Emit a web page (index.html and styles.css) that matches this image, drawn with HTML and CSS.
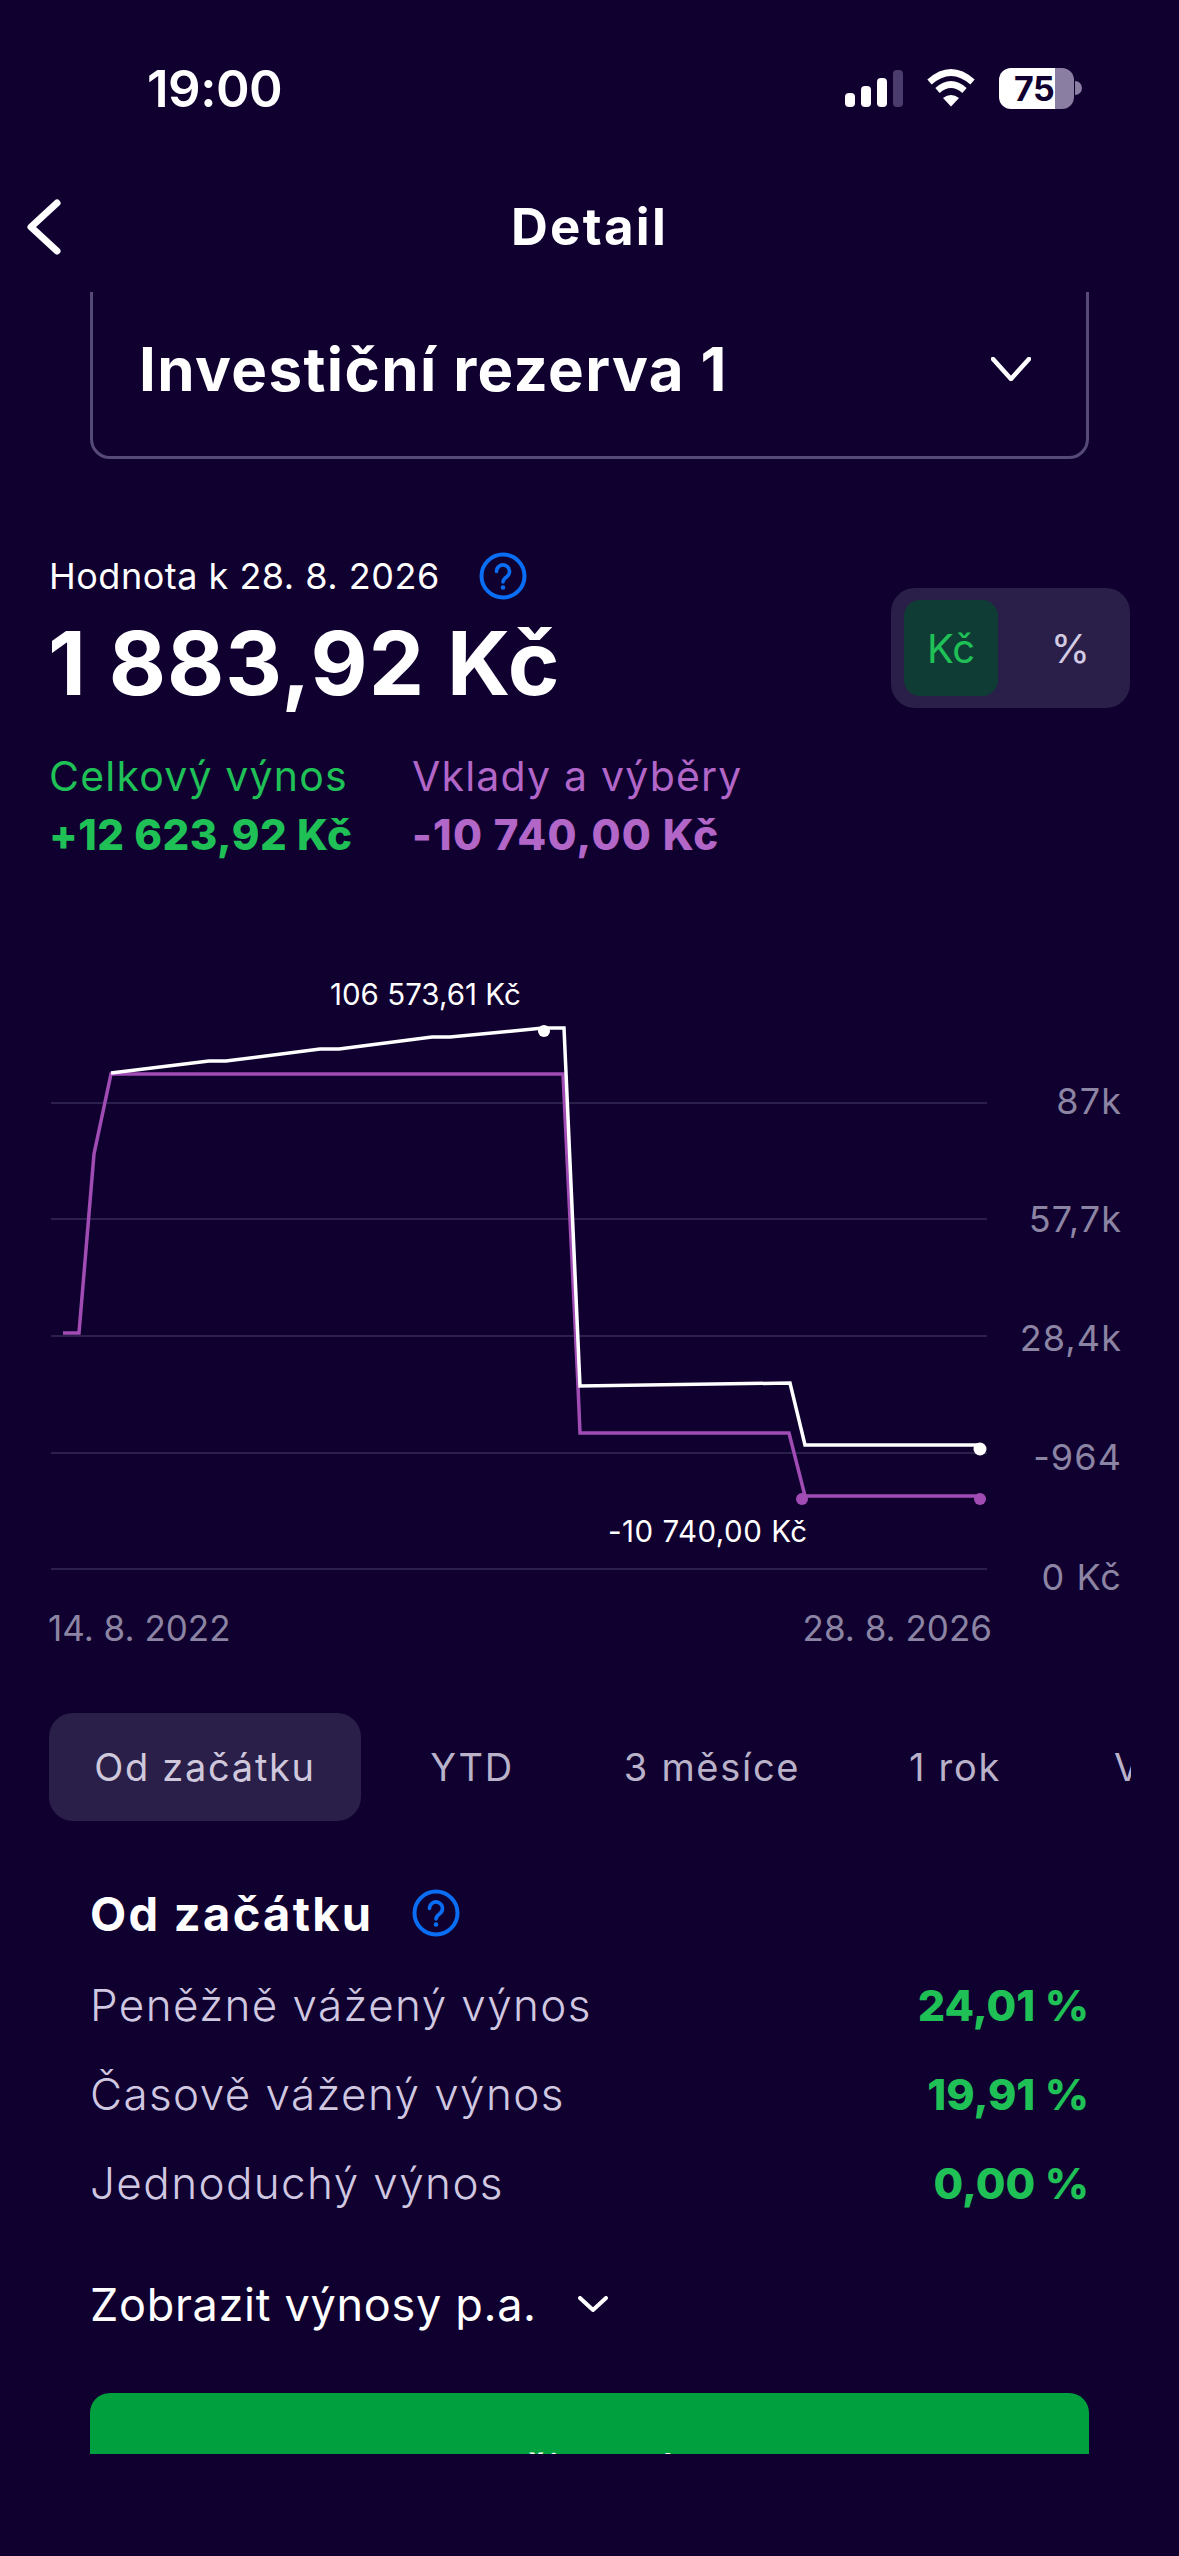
FILE: index.html
```html
<!DOCTYPE html>
<html lang="cs">
<head>
<meta charset="utf-8">
<title>Detail</title>
<link rel="stylesheet" href="styles.css">
</head>
<body>
<svg class="defs" width="0" height="0" aria-hidden="true">
  <symbol id="help" viewBox="0 0 48 48">
    <circle cx="24" cy="24" r="21.5" fill="none" stroke="#0a6ef5" stroke-width="4"/>
    <path d="M17.5 19.5a6.5 6.5 0 1 1 10.5 5c-2.6 1.9-4 3-4 5.5" fill="none" stroke="#0a6ef5" stroke-width="3.6" stroke-linecap="round"/>
    <circle cx="24" cy="35.5" r="2.3" fill="#0a6ef5"/>
  </symbol>
</svg>
<div class="phone">
  <header class="status">
    <span class="time">19:00</span>
    <div class="status-icons">
      <div class="signal">
        <i class="bar b1"></i><i class="bar b2"></i><i class="bar b3"></i><i class="bar b4"></i>
      </div>
      <svg class="wifi" viewBox="0 0 50 38" width="50" height="38">
        <path d="M3.5 13Q25-6 46.500 13" fill="none" stroke="#fff" stroke-width="6.500"/>
        <path d="M11.500 21.500Q25 9.500 38.500 21.500" fill="none" stroke="#fff" stroke-width="6.500"/>
        <path d="M17 29Q25 23 33 29L25 37.500Z" fill="#fff"/>
      </svg>
      <div class="battery-wrap">
        <div class="battery"><span>75</span></div>
        <i class="nub"></i>
      </div>
    </div>
  </header>
  <nav class="nav">
    <svg class="back" viewBox="0 0 40 60" width="40" height="60">
      <path d="M33 6 7 30l26 24" fill="none" stroke="#fff" stroke-width="7" stroke-linecap="round" stroke-linejoin="round"/>
    </svg>
    <h1 class="nav-title">Detail</h1>
    <span></span>
  </nav>
  <main class="scroller">
    <div class="select">
      <span class="select-name">Investiční rezerva 1</span>
      <svg class="select-chev" viewBox="0 0 40 24" width="40" height="24">
        <path d="M2 2l18 20L38 2" fill="none" stroke="#fff" stroke-width="4.500" stroke-linecap="round" stroke-linejoin="round"/>
      </svg>
    </div>
    <section class="summary">
      <div class="summary-left">
        <div class="value-label">
          <span>Hodnota k 28. 8. 2026</span>
          <svg class="help" width="48" height="48"><use href="#help"/></svg>
        </div>
        <div class="value-big">1 883,92 Kč</div>
        <div class="stats">
          <div class="stat stat-green">
            <div class="stat-label">Celkový výnos</div>
            <div class="stat-value">+12 623,92 Kč</div>
          </div>
          <div class="stat stat-purple">
            <div class="stat-label">Vklady a výběry</div>
            <div class="stat-value">-10 740,00 Kč</div>
          </div>
        </div>
      </div>
      <div class="unit">
        <span class="unit-on">Kč</span>
        <span class="unit-off">%</span>
      </div>
    </section>
    <svg class="chart" viewBox="0 960 1179 700" width="1179" height="700">
      <g class="grid">
        <line x1="51" x2="987" y1="1103" y2="1103"/>
        <line x1="51" x2="987" y1="1219" y2="1219"/>
        <line x1="51" x2="987" y1="1336" y2="1336"/>
        <line x1="51" x2="987" y1="1453" y2="1453"/>
        <line x1="51" x2="987" y1="1569" y2="1569"/>
      </g>
      <polyline class="line-purple" points="63,1333 79,1333 94,1154 111,1074 563,1074 578,1386 580,1433 789,1433 805,1496 980,1496"/>
      <polyline class="line-white" points="111,1073 209,1061 226,1061 320,1049 339,1049 432,1037 450,1037 543,1028 564,1028 580,1386 790,1383 805,1445 980,1445"/>
      <circle class="dot-white" cx="544" cy="1031" r="6"/>
      <circle class="dot-white" cx="980" cy="1449" r="6.500"/>
      <circle class="dot-purple" cx="802" cy="1499" r="6"/>
      <circle class="dot-purple" cx="980" cy="1499" r="6"/>
      <text class="peak" x="330" y="1005">106 573,61 Kč</text>
      <text class="peak peak-low" x="608" y="1542">-10 740,00 Kč</text>
      <g class="axis">
        <text x="1122" y="1114">87k</text>
        <text x="1122" y="1232">57,7k</text>
        <text x="1122" y="1351">28,4k</text>
        <text x="1122" y="1470">-964</text>
        <text x="1122" y="1590">0 Kč</text>
      </g>
      <text class="date" x="48" y="1641">14. 8. 2022</text>
      <text class="date" x="992" y="1641" text-anchor="end">28. 8. 2026</text>
    </svg>
    <div class="tabs">
      <span class="tab tab-on">Od začátku</span>
      <span class="tab">YTD</span>
      <span class="tab">3 měsíce</span>
      <span class="tab">1 rok</span>
      <span class="tab tab-last">Vlastní</span>
    </div>
    <section class="returns">
      <div class="returns-head">
        <h2>Od začátku</h2>
        <svg class="help" width="48" height="48"><use href="#help"/></svg>
      </div>
      <div class="row"><span>Peněžně vážený výnos</span><b>24,01 %</b></div>
      <div class="row"><span>Časově vážený výnos</span><b>19,91 %</b></div>
      <div class="row"><span>Jednoduchý výnos</span><b>0,00 %</b></div>
      <div class="more">
        <span>Zobrazit výnosy p.a.</span>
        <svg viewBox="0 0 30 16" width="30" height="16">
          <path d="M2 2l13 12L28 2" fill="none" stroke="#fff" stroke-width="4" stroke-linecap="round" stroke-linejoin="round"/>
        </svg>
      </div>
      <div class="cta">Vložit peníze</div>
    </section>
  </main>
</div>
</body>
</html>
```
FILE: styles.css
```css
* { box-sizing: border-box; }
html, body { margin: 0; padding: 0; background: #100030; }
body { font-family: Inter, "Noto Sans", sans-serif; color: #fff; }
.defs { position: absolute; }
.phone { width: 1179px; height: 2556px; overflow: hidden; background: #100030; }

.status { height: 174px; display: flex; align-items: center; justify-content: space-between; padding: 2px 97px 0 147px; }
.time { font-size: 51px; font-weight: 600; letter-spacing: -0.5px; }
.status-icons { display: flex; align-items: center; }
.signal { display: flex; align-items: flex-end; gap: 6px; height: 37px; }
.bar { width: 10px; border-radius: 4px; background: #fff; display: block; }
.b1 { height: 14px; }
.b2 { height: 21px; }
.b3 { height: 29px; }
.b4 { height: 37px; background: #4a3c6c; }
.wifi { margin-left: 23px; }
.battery-wrap { display: flex; align-items: center; margin-left: 23px; gap: 1px; }
.battery { width: 75px; height: 41px; border-radius: 12px; background: linear-gradient(90deg, #fff 0 56px, #8a7fa3 56px); display: flex; align-items: center; padding-left: 15px; color: #100030; font-size: 34px; font-weight: 700; letter-spacing: -0.5px; }
.nub { width: 7px; height: 14px; background: #8a7fa3; border-radius: 0 7px 7px 0; display: block; }

.nav { height: 118px; padding-bottom: 12px; display: grid; grid-template-columns: 1fr auto 1fr; align-items: center; padding-left: 24px; padding-right: 24px; }
.nav-title { margin: 0; font-size: 51px; font-weight: 700; line-height: 60px; letter-spacing: 2.3px; }

.scroller { height: 2162px; overflow: hidden; }
.select { margin: -40px 90px 0; height: 207px; padding-top: 26px; border: 3px solid #564b78; border-radius: 20px; display: flex; align-items: center; justify-content: space-between; padding-left: 46px; padding-right: 55px; }
.select-name { font-size: 60px; font-weight: 700; letter-spacing: 1.4px; }

.summary { margin-top: 93px; padding: 0 49px; display: flex; justify-content: space-between; align-items: flex-start; }
.value-label { height: 48px; display: flex; align-items: center; gap: 39px; font-size: 36px; letter-spacing: 0.5px; }
.help { display: block; }
.value-big { margin-top: 18px; margin-left: -1px; font-size: 88px; line-height: 90px; font-weight: 700; letter-spacing: 1px; }
.stats { margin-top: 44px; display: flex; }
.stat { width: 363px; }
.stat-label { font-size: 41px; line-height: 48px; letter-spacing: 1.2px; }
.stat-value { margin-top: 11px; font-size: 42px; line-height: 48px; font-weight: 800; letter-spacing: 0.5px; }
.stat-green { color: #1fc157; }
.stat-purple { color: #b166c8; }
.stat-purple .stat-value { letter-spacing: 1.3px; }
.unit { margin-top: 36px; width: 239px; height: 120px; padding: 12px 13px; border-radius: 24px; background: #2a1f48; display: flex; font-size: 40px; }
.unit-on { width: 94px; border-radius: 16px; background: #0f3d35; color: #1fc157; display: flex; align-items: center; justify-content: center; }
.unit-off { flex: 1; padding-left: 26px; color: #d3cbe3; display: flex; align-items: center; justify-content: center; }

.chart { display: block; margin-top: 101px; font-family: Inter, sans-serif; }
.grid line { stroke: #2b1f4b; stroke-width: 2px; }
.line-purple { fill: none; stroke: #a04cb4; stroke-width: 3.500; }
.line-white { fill: none; stroke: #fff; stroke-width: 3.500; }
.dot-white { fill: #fff; }
.dot-purple { fill: #a04cb4; }
.peak { fill: #fff; font-size: 29.500px; }
.peak-low { letter-spacing: 0.5px; }
.axis text { fill: #8c84a3; font-size: 36px; letter-spacing: 1.1px; text-anchor: end; }
.date { fill: #8c84a3; font-size: 35px; }

.tabs { margin: 53px 48px 0 49px; display: grid; grid-template-columns: 312px 222px 258px 228px 100px; height: 108px; overflow: hidden; }
.tab { display: flex; align-items: center; justify-content: center; font-size: 38px; letter-spacing: 1.7px; color: #b9b2c9; white-space: nowrap; }
.tab-on { background: #2a1f48; border-radius: 24px; color: #cfc8dd; }
.tab-last { justify-content: flex-start; padding-left: 45px; }

.returns { padding: 0 90px; }
.returns-head { margin-top: 62px; margin-bottom: 17px; height: 60px; display: flex; align-items: center; gap: 39px; }
.returns-head h2 { margin: 0; font-size: 47px; font-weight: 700; letter-spacing: 2.3px; }
.row { height: 89px; display: flex; align-items: center; justify-content: space-between; font-size: 44px; font-weight: 300; letter-spacing: 1.4px; color: #d0c8e0; }
.row b { font-weight: 800; color: #1fc157; font-size: 43px; letter-spacing: 0; }
.more { margin-top: 47px; height: 60px; display: flex; align-items: center; gap: 41px; font-size: 45px; letter-spacing: 0.7px; }
.cta { margin-top: 59px; height: 130px; border-radius: 20px 20px 0 0; background: #00a03e; display: flex; align-items: center; justify-content: center; padding-top: 20px; font-size: 38px; font-weight: 600; letter-spacing: 1.5px; }
```
